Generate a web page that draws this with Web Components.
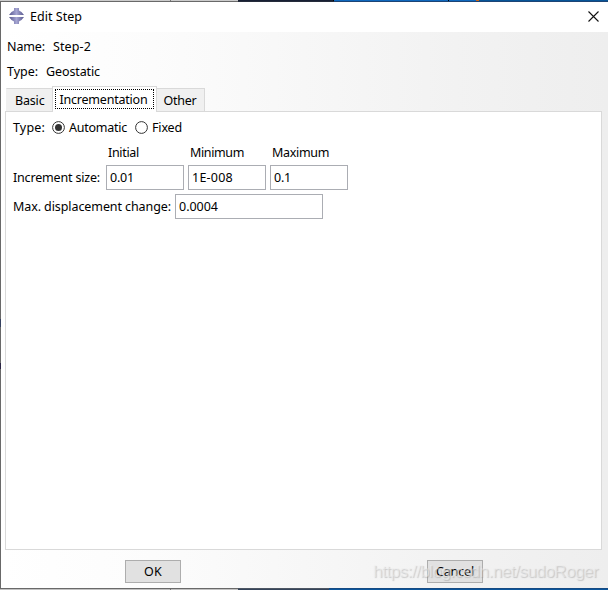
<!DOCTYPE html>
<html lang="en"><head><meta charset="utf-8"><title>Edit Step</title>
<style>
html,body{margin:0;width:608px;height:590px;overflow:hidden;background:#fff}
body{font:12.5px/18px "Noto Sans","Open Sans",sans-serif;color:#000}
</style></head><body>
<step-dialog></step-dialog>
<script>
const define=(name,css,html,init)=>customElements.define(name,class extends HTMLElement{
  connectedCallback(){
    if(this.shadowRoot)return;
    const r=this.attachShadow({mode:'open'});
    r.innerHTML='<style>*{box-sizing:border-box}'+css+'</style>'+html;
    if(init)init(this,r);
  }
});
// A one-line label whose letter spacing is tuned to the width it is given.
define('ui-label',':host{display:block;white-space:pre;height:18px;flex:none}span{display:inline-block}','<span></span>',(el,r)=>{
  const s=r.querySelector('span'),t=el.getAttribute('text'),w=+el.getAttribute('w');
  s.textContent=t;el.style.width=w+'px';
  s.style.letterSpacing=((w-s.getBoundingClientRect().width)/t.length)+'px';
});
define('ui-field',':host{display:flex;box-sizing:border-box;height:25px;border:1px solid #abadb3;background:#fff;padding:3px 0 0 3px;flex:none}','<slot></slot>');
define('ui-button',':host{display:flex;box-sizing:border-box;width:56px;height:23px;border:1px solid #adadad;background:#e1e1e1;justify-content:center;padding-top:2px;flex:none}','<slot></slot>');
define('ui-radio',':host{display:flex;height:18px;gap:4px;flex:none}svg{margin-top:2px;display:block}',
  '<svg width="13" height="13"><circle cx="6.5" cy="6.5" r="5.9" fill="#fff" stroke="#333"/><circle class="dot" cx="6.5" cy="6.5" r="3.5" fill="#333"/></svg><slot></slot>',
  (el,r)=>{if(!el.hasAttribute('checked'))r.querySelector('.dot').remove()});
define('ui-tab',`:host{display:flex;box-sizing:border-box;height:23px;border:1px solid #d9d9d9;border-bottom:0;background:#f0f0f0;padding:3px 7px 0 7px;flex:none}
:host([active]){height:26px;background:#fff;padding:2px 2px 0;margin:0 -1px -1px;z-index:1}
div{display:flex}:host([active]) div{border:1px dotted #000;height:20px;padding:1px 5px 0 4px}`,'<div><slot></slot></div>');
define('title-bar',`:host{display:flex;height:30px;background:#fff;padding:6px 9px 0 8px;box-sizing:border-box;flex:none}
.i{margin-right:6px}.x{margin:3px 0 0 auto}`,
`<svg class="i" width="15" height="16" viewBox="0 0 15 16"><defs><linearGradient id="g"><stop stop-color="#58588e"/><stop offset=".5" stop-color="#a5a5d2"/><stop offset="1" stop-color="#58588e"/></linearGradient></defs>
<path fill="url(#g)" d="M5 0H10V2.500L12.500 4L15 7H0L2.500 4L5 2.500ZM0 9H15L12.500 12L10 13.500V16H5V13.500L2.500 12Z"/></svg>
<ui-label text="Edit Step" w="52"></ui-label>
<svg class="x" width="11" height="11"><path d="M.5.5l10 10M10.500.5l-10 10" stroke="#111" stroke-width="1.1"/></svg>`);
define('step-tabs',`:host{display:block;margin:4px 6px 0 4px}
.tabs{display:flex;align-items:flex-end;height:25px;padding-left:1px;position:relative}
.panel{height:439px;border:1px solid #d9d9d9;background:#fff;padding:7px 7px;display:flex;flex-direction:column}
.row{display:flex;flex:none}.type{height:25px}.heads{height:21px;padding-left:95px}.size{height:29px;gap:4px}.disp{gap:4px}
.row.size>ui-label,.row.disp>ui-label{margin-top:4px}`,
`<div class="tabs"><ui-tab style="border-left-color:#f0f0f0;padding-left:8px"><ui-label text="Basic" w="29.500"></ui-label></ui-tab>
<ui-tab active><ui-label text="Incrementation" w="88"></ui-label></ui-tab>
<ui-tab><ui-label text="Other" w="33"></ui-label></ui-tab></div>
<div class="panel">
<div class="row type"><ui-label text="Type:" w="32" style="margin-right:7px"></ui-label><ui-radio checked style="margin-right:8px"><ui-label text="Automatic" w="58"></ui-label></ui-radio><ui-radio><ui-label text="Fixed" w="30"></ui-label></ui-radio></div>
<div class="row heads"><ui-label text="Initial" w="31" style="margin-right:51px"></ui-label><ui-label text="Minimum" w="54" style="margin-right:28px"></ui-label><ui-label text="Maximum" w="57"></ui-label></div>
<div class="row size"><ui-label text="Increment size:" w="87" style="margin-right:2px"></ui-label>
<ui-field style="width:78px"><ui-label text="0.01" w="24"></ui-label></ui-field><ui-field style="width:78px"><ui-label text="1E-008" w="41"></ui-label></ui-field><ui-field style="width:78px"><ui-label text="0.1" w="17"></ui-label></ui-field></div>
<div class="row disp"><ui-label text="Max. displacement change:" w="158"></ui-label><ui-field style="width:148px"><ui-label text="0.0004" w="39"></ui-label></ui-field></div>
</div>`);
define('step-dialog',`:host{display:flex;flex-direction:column;width:608px;height:590px;box-sizing:border-box;overflow:hidden;position:relative}
.strip{height:1px;flex:none;background:linear-gradient(90deg,#cbcbcb 170px,#777 170px 171px,#cbcbcb 171px 238px,#171f33 238px 333px,#000 333px 334px,#0f68bd 334px 448px,#000 448px 449px,#0f68bd 449px 476px,#cf6514 476px 479px,#075497 479px)}
.edge{height:1px;flex:none;background:linear-gradient(90deg,#696969 238px,#252b3a 238px 334px,#1c4475 334px)}
.low{background:linear-gradient(90deg,#c2c2c2 170px,#777 170px 171px,#c2c2c2 171px 238px,#35445a 238px 329px,#0b559b 329px)}
.bottom{background:linear-gradient(90deg,#696969 238px,#4d5663 238px 329px,#164a82 329px)}
.win{height:586px;flex:none;border-left:1px solid;border-image:linear-gradient(#696969 317px,#35405f 317px 325px,#696969 325px 361px,#2b2444 361px 367px,#696969 367px) 1;display:flex;flex-direction:column}
.body{height:556px;background:linear-gradient(90deg,#fff,#fcfcfc 25%,#f7f7f7 50%,#f2f2f2 75%,#eee);}
.name{display:flex;padding:6px 0 0 6px;height:25px;gap:8px}
.buttons{display:flex;padding:10px 0 0 124px;gap:246px}
.mark{position:absolute;left:373px;top:561px;font:17px/22px "Liberation Sans",sans-serif;color:rgba(240,240,240,.5);text-shadow:1px 1px 1px rgba(140,140,140,.4)}.mark ui-label{height:22px}`,
`<div class="strip"></div><div class="edge"></div><div class="win"><title-bar></title-bar><div class="body">
<div class="name"><ui-label text="Name:" w="38"></ui-label><ui-label text="Step-2" w="38"></ui-label></div>
<div class="name"><ui-label text="Type:" w="31"></ui-label><ui-label text="Geostatic" w="54"></ui-label></div>
<step-tabs></step-tabs>
<div class="buttons"><ui-button><ui-label text="OK" w="18"></ui-label></ui-button><ui-button><ui-label text="Cancel" w="38"></ui-label></ui-button></div>
</div></div><div class="edge bottom"></div><div class="strip low"></div>
<div class="mark"><ui-label text="https://blog.csdn.net/sudoRoger" w="225"></ui-label></div>`);
</script></body></html>
